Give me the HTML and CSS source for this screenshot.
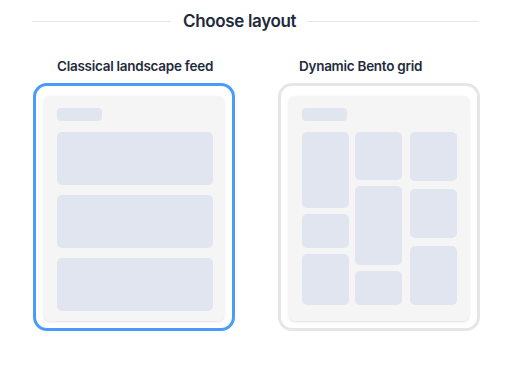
FILE: index.html
```html
<!DOCTYPE html>
<html>
<head>
	<title>Choose layout</title>
	<meta charset="utf-8">
	<link rel="stylesheet" href="styles.css">
</head>
<body>
<div class="page">
	<div class="heading">
		<span class="rule rule-left"></span>
		<h1>Choose layout</h1>
		<span class="rule"></span>
	</div>

	<div class="options">
		<div class="option">
			<div class="label">Classical landscape feed</div>
			<div class="frame selected">
				<div class="sheet feed">
					<div class="pill"></div>
					<div class="row"></div>
					<div class="row"></div>
					<div class="row"></div>
				</div>
			</div>
		</div>

		<div class="option">
			<div class="label label-right">Dynamic Bento grid</div>
			<div class="frame">
				<div class="sheet bento">
					<div class="pill"></div>
					<div class="cols">
						<div class="col">
							<div class="tile" style="height:76px"></div>
							<div class="tile" style="height:34px"></div>
							<div class="tile" style="height:51px"></div>
						</div>
						<div class="col">
							<div class="tile" style="height:48px"></div>
							<div class="tile" style="height:79px"></div>
							<div class="tile" style="height:34px"></div>
						</div>
						<div class="col col-wide">
							<div class="tile" style="height:49px"></div>
							<div class="tile" style="height:49px"></div>
							<div class="tile" style="height:59px"></div>
						</div>
					</div>
				</div>
			</div>
		</div>
	</div>
</div>
</body>
</html>
```

FILE: styles.css
```css
body{
	margin: 0;
	background-color: #fff;
	font-family: Inter, "Noto Sans", sans-serif;
	color: #1e2b3c;
}
.page{
	width: 512px;
	height: 369px;
	padding-top: 10px;
	box-sizing: border-box;
}
.heading{
	display: flex;
	align-items: center;
	gap: 12px;
	margin: 0 34px 0 32px;
}
.heading h1{
	margin: 0;
	font-size: 17px;
	line-height: 22px;
	font-weight: 600;
	letter-spacing: -0.02em;
}
.rule{
	flex: 1;
	height: 1px;
	background-color: #e3e5e8;
}
.rule-left{
	flex: none;
	width: 139px;
}

.options{
	display: flex;
	gap: 43px;
	margin: 26px 0 0 33px;
}
.option{
	width: 202px;
}
.label{
	font-size: 13.5px;
	line-height: 17px;
	font-weight: 600;
	letter-spacing: -0.02em;
	padding-left: 24px;
	margin-bottom: 8px;
}
.label-right{
	padding-left: 21px;
}

.frame{
	width: 202px;
	height: 248px;
	box-sizing: border-box;
	border: 3px solid #e6e6e8;
	border-radius: 14px;
	padding: 10px 8px 7px;
}
.frame.selected{
	border-color: #4a9cfa;
}
.sheet{
	height: 100%;
	background-color: #f5f5f5;
	border-radius: 6px;
	box-shadow: 0 1px 3px rgba(0,0,0,.12);
	box-sizing: border-box;
	padding: 12px 11px 9px 13px;
}
.pill{
	width: 45px;
	height: 13px;
	border-radius: 4px;
	background-color: #e1e5f0;
	margin-bottom: 11px;
}
.feed .row{
	height: 53px;
	border-radius: 5px;
	background-color: #e1e5f0;
	margin-bottom: 10px;
}
.cols{
	display: flex;
	gap: 6px;
}
.col{
	width: 47px;
	display: flex;
	flex-direction: column;
	gap: 6px;
}
.col-wide{
	margin-left: 2px;
	gap: 8px;
}
.tile{
	border-radius: 5px;
	background-color: #e1e5f0;
}
```
